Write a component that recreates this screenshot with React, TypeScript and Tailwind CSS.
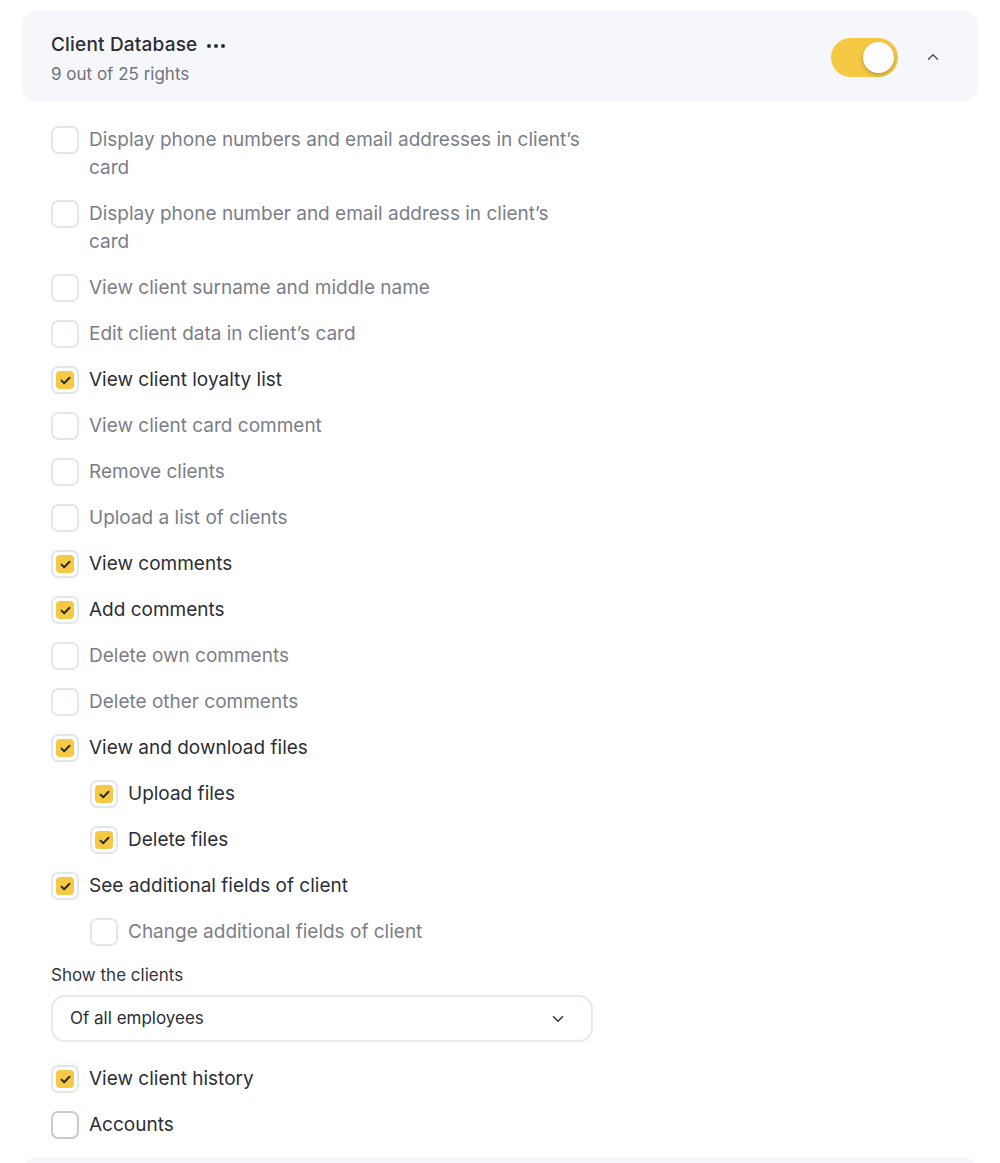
import { ChevronDown, ChevronUp } from 'lucide-react';

type Right = { label: string; checked: boolean; nested?: boolean; strong?: boolean };

const rights: Right[] = [
  { label: 'Display phone numbers and email addresses in client’s card', checked: false },
  { label: 'Display phone number and email address in client’s card', checked: false },
  { label: 'View client surname and middle name', checked: false },
  { label: 'Edit client data in client’s card', checked: false },
  { label: 'View client loyalty list', checked: true },
  { label: 'View client card comment', checked: false },
  { label: 'Remove clients', checked: false },
  { label: 'Upload a list of clients', checked: false },
  { label: 'View comments', checked: true },
  { label: 'Add comments', checked: true },
  { label: 'Delete own comments', checked: false },
  { label: 'Delete other comments', checked: false },
  { label: 'View and download files', checked: true },
  { label: 'Upload files', checked: true, nested: true },
  { label: 'Delete files', checked: true, nested: true },
  { label: 'See additional fields of client', checked: true },
  { label: 'Change additional fields of client', checked: false, nested: true },
];

function Box({ checked, dark }: { checked: boolean; dark?: boolean }) {
  return (
    <span
      className={
        'flex h-7 w-7 shrink-0 items-center justify-center rounded-[7px] border-2 bg-white ' +
        (dark ? 'border-[#c8cbd5]' : 'border-[#e4e6ee]')
      }
    >
      {checked && (
        <span className="flex h-[18px] w-[18px] items-center justify-center rounded-[4px] bg-[#f6c944]">
          <svg width="11" height="9" viewBox="0 0 11 9" fill="none">
            <path d="M1.5 4.6 4.2 7.2 9.5 1.8" stroke="#2b2b30" strokeWidth="2" strokeLinecap="round" strokeLinejoin="round" />
          </svg>
        </span>
      )}
    </span>
  );
}

function Row({ r }: { r: Right }) {
  return (
    <label className={'flex items-start gap-[10px] ' + (r.nested ? 'pl-[39px]' : '')}>
      <Box checked={r.checked} dark={r.strong} />
      <span
        className={
          'text-[19px] leading-7 ' +
          (r.checked || r.strong ? 'text-[#2c2e35]' : 'text-[#7b7e88]')
        }
      >
        {r.label}
      </span>
    </label>
  );
}

export default function App() {
  return (
    <div
      className="min-h-[1163px] bg-white px-[22px] pt-[10px]"
      style={{ fontFamily: 'Inter, "Noto Sans", sans-serif' }}
    >
      <div className="flex h-[92px] items-center justify-between rounded-2xl bg-[#f6f7fb] pl-[29px] pr-[36px]">
        <div className="pt-[4px]">
          <div className="flex items-center gap-[10px] text-[19px] font-medium leading-7 tracking-[0.01em] text-[#2c2e35]">
            Client Database
            <span className="flex gap-[3px] pt-[2px]">
              <span className="h-[4px] w-[4px] rounded-full bg-[#2c2e35]" />
              <span className="h-[4px] w-[4px] rounded-full bg-[#2c2e35]" />
              <span className="h-[4px] w-[4px] rounded-full bg-[#2c2e35]" />
            </span>
          </div>
          <div className="mt-[3px] text-[17px] leading-6 text-[#6f727c]">9 out of 25 rights</div>
        </div>
        <div className="flex items-center gap-[26px] pt-[2px]">
          <div className="flex h-[39px] w-[67px] items-center justify-end rounded-full bg-[#f6c944] px-[4px]">
            <span className="h-[31px] w-[31px] rounded-full bg-white shadow-[0_2px_4px_rgba(0,0,0,0.25)]" />
          </div>
          <ChevronUp size={18} strokeWidth={2} className="text-[#55575f]" />
        </div>
      </div>

      <div className="w-[571px] pl-[29px] pt-[24px]">
        <div className="flex flex-col gap-[18px]">
          {rights.map((r) => (
            <Row key={r.label} r={r} />
          ))}
        </div>

        <div className="mt-[17px] text-[17px] leading-6 text-[#33353c]">Show the clients</div>
        <div className="mt-[8px] flex h-[47px] items-center justify-between rounded-[14px] border-2 border-[#e6e8f2] bg-white pl-[17px] pr-[24px] text-[17px] text-[#2c2e35]">
          Of all employees
          <ChevronDown size={18} strokeWidth={2} className="text-[#33353c]" />
        </div>

        <div className="mt-[23px] flex flex-col gap-[18px]">
          <Row r={{ label: 'View client history', checked: true }} />
          <Row r={{ label: 'Accounts', checked: false, strong: true }} />
        </div>
      </div>

      <div className="mt-[18px] h-[40px] rounded-t-2xl bg-[#f6f7fb]" />
    </div>
  );
}
